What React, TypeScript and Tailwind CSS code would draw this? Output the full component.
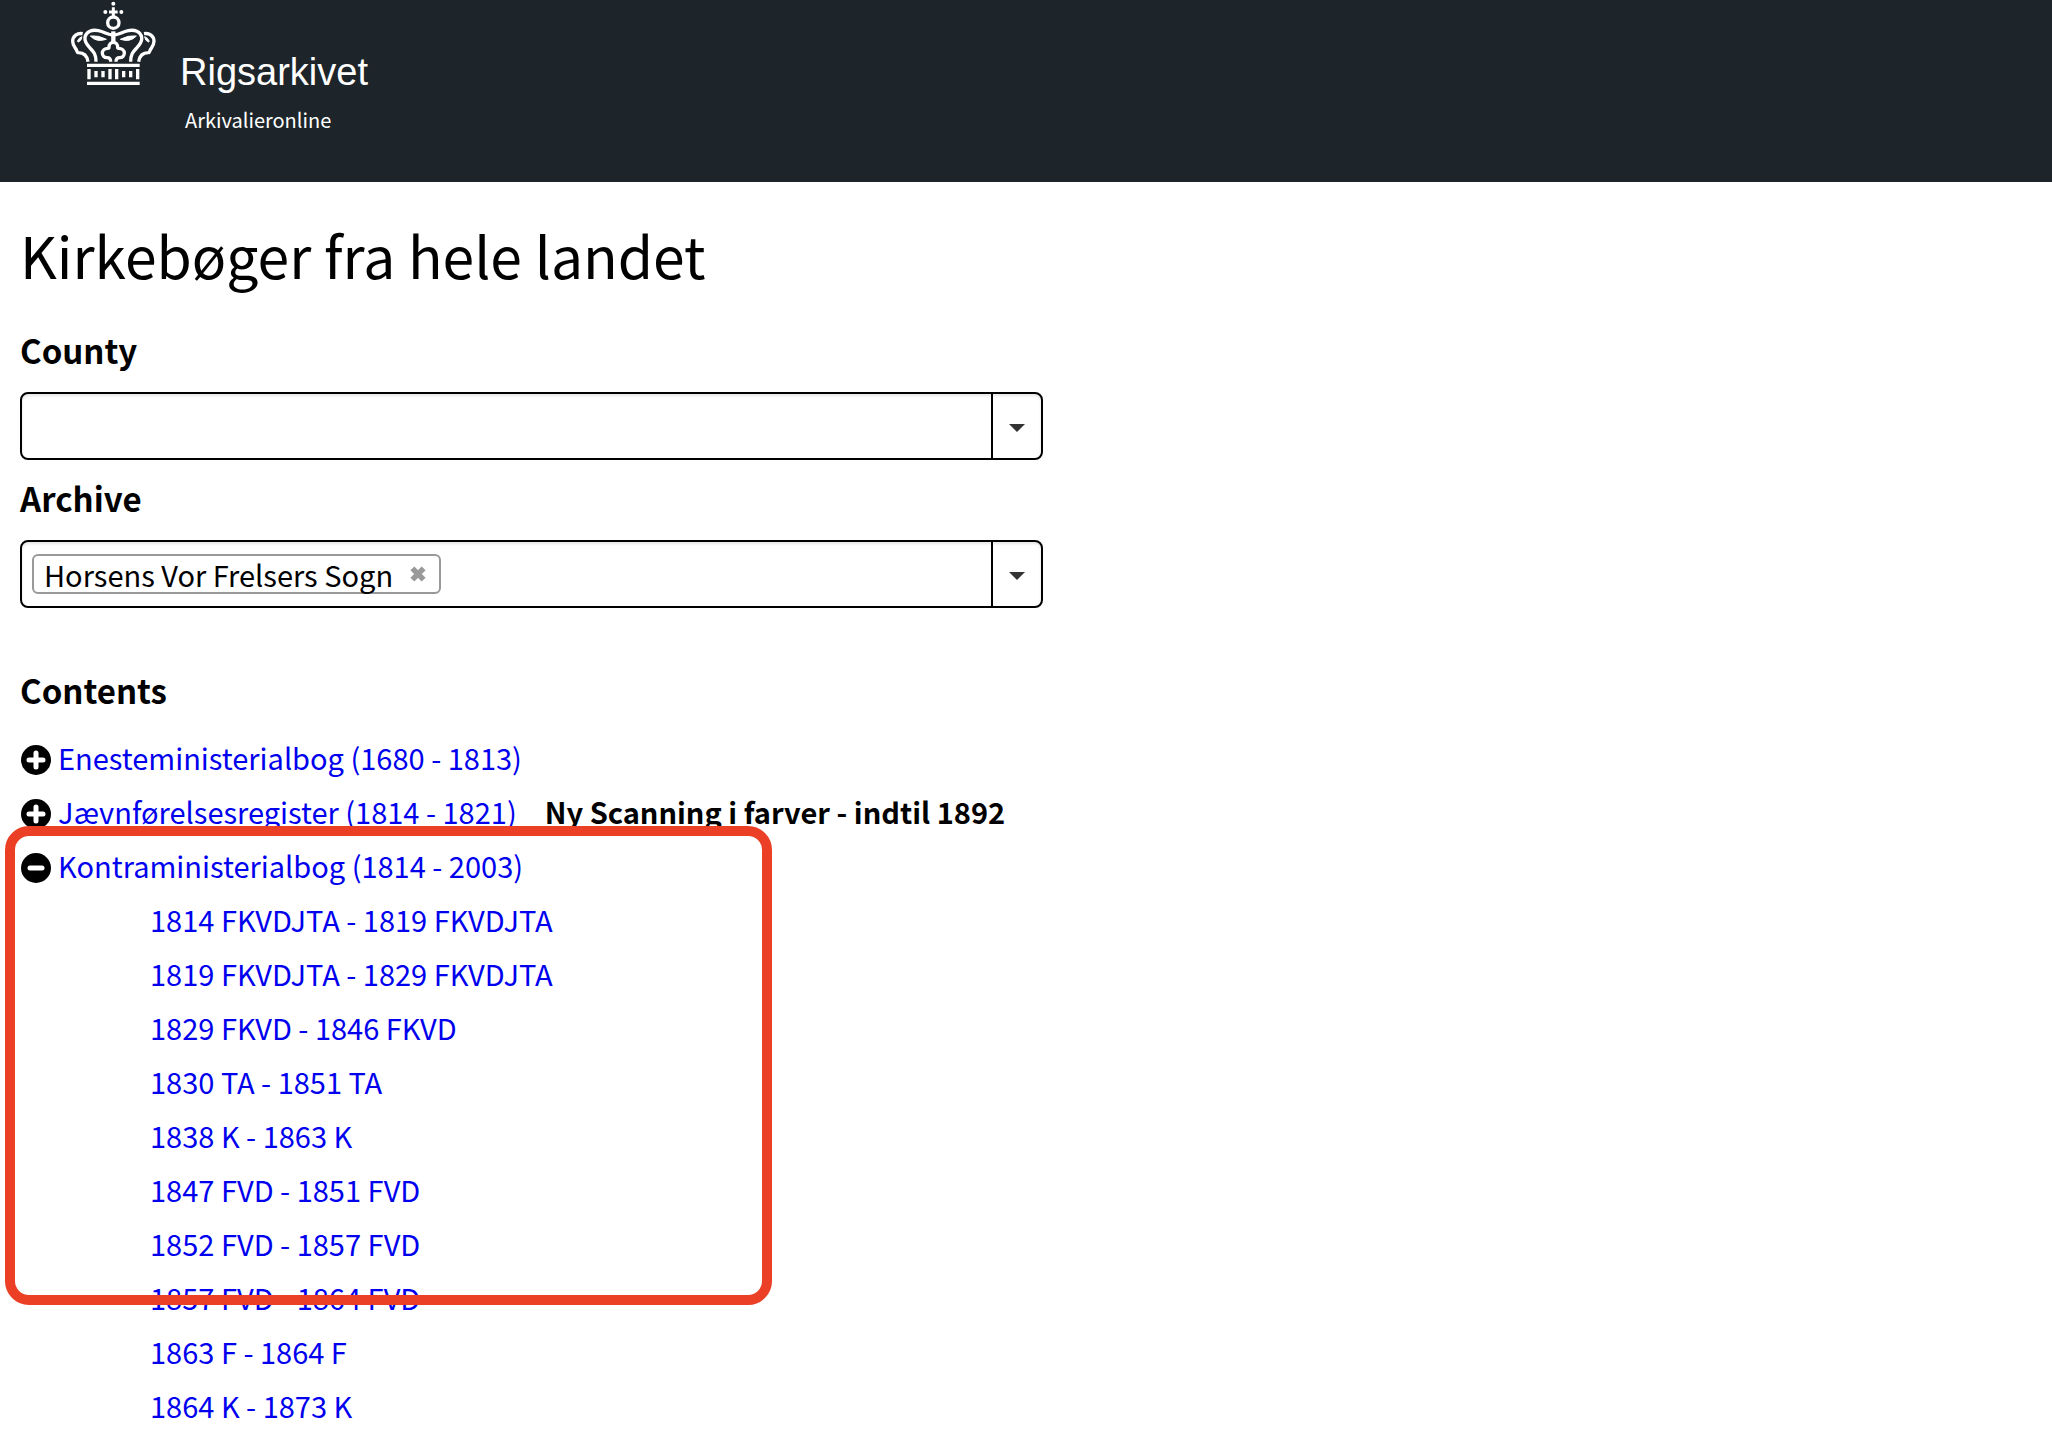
import { useState } from "react";

interface Entry {
  title: string;
  note?: string;
  volumes?: string[];
  highlighted?: boolean;
}

const entries: Entry[] = [
  { title: "Enesteministerialbog (1680 - 1813)" },
  {
    title: "Jævnførelsesregister (1814 - 1821)",
    note: "Ny Scanning i farver - indtil 1892",
  },
  {
    title: "Kontraministerialbog (1814 - 2003)",
    highlighted: true,
    volumes: [
      "1814 FKVDJTA - 1819 FKVDJTA",
      "1819 FKVDJTA - 1829 FKVDJTA",
      "1829 FKVD - 1846 FKVD",
      "1830 TA - 1851 TA",
      "1838 K - 1863 K",
      "1847 FVD - 1851 FVD",
      "1852 FVD - 1857 FVD",
      "1857 FVD - 1864 FVD",
      "1863 F - 1864 F",
      "1864 K - 1873 K",
    ],
  },
];

function Crown() {
  return (
    <svg
      className="w-[130px] h-[100px] shrink-0"
      viewBox="0 0 390 300"
      fill="none"
      stroke="#fff"
      strokeWidth="10"
      aria-hidden="true"
    >
      {/* Orb and cross */}
      <circle cx="190" cy="11" r="6" fill="#fff" stroke="none" />
      <circle cx="166" cy="36" r="6" fill="#fff" stroke="none" />
      <circle cx="214" cy="36" r="6" fill="#fff" stroke="none" />
      <path d="M190 22v26M177 36h26" strokeWidth="9" />
      <circle cx="190" cy="68" r="17" />
      {/* Outer arches */}
      <path d="M98 101C82 98 68 108 68 124c0 12 7 18 11 25 2 4 2 9 6 9 14 0 26 8 29 27" />
      <path d="M282 101c16-3 30 7 30 23 0 12-7 18-11 25-2 4-2 9-6 9-14 0-26 8-29 27" />
      <path d="M82 124q4-11 14-14-1 12-11 16zM298 124q-4-11-14-14 1 12 11 16z" fill="#fff" strokeWidth="3" />
      {/* Front arches */}
      <path d="M138 185c0-24-8-30-19-42-10-11-16-19-14-31 3-18 22-24 40-20 20 4 28 13 45 13s25-9 45-13c18-4 37 2 40 20 2 12-4 20-14 31-11 12-19 18-19 42" />
      <path d="M121 108q25-3 48 10-30 10-48-10zM259 108q-25-3-48 10 30 10 48-10z" fill="#fff" strokeWidth="3" />
      {/* Centre leaf */}
      <path d="M190 94v36" strokeWidth="13" />
      <path d="M182 185c0-10-4-12-11-12-9 0-14-6-14-14s7-14 17-14c2 0 3-1 3-3 0-9 6-15 13-15s13 6 13 15c0 2 1 3 3 3 10 0 17 6 17 14s-5 14-14 14c-7 0-11 2-11 12" />
      {/* Base */}
      <path d="M111 196h158M111 250h158" />
      <path d="M117 207v31M180 207v31M200 207v31M263 207v31" />
      <path d="M138 213v19M159 213v19M221 213v19M242 213v19" />
    </svg>
  );
}

function ToggleIcon({ open }: { open: boolean }) {
  return (
    <svg className="w-8 h-8" viewBox="0 0 32 32" aria-hidden="true">
      <circle cx="16" cy="16" r="15" fill="#000" />
      <path
        d={open ? "M10 16h12" : "M9 16h14M16 9v14"}
        stroke="#fff"
        strokeWidth="5"
        strokeLinecap="round"
      />
    </svg>
  );
}

interface PickerProps {
  id: string;
  label: string;
  initial?: string[];
}

function Picker({ id, label, initial = [] }: PickerProps) {
  const [tags, setTags] = useState(initial);

  return (
    <div className="max-w-[1023px]">
      <label htmlFor={id} className="block text-[33px] leading-[48px] font-bold">
        {label}
      </label>
      <div className="mt-[18px] flex h-[68px] rounded-lg border-2 border-black bg-white shadow-[inset_0_2px_3px_rgba(0,0,0,0.1)]">
        <div className="flex flex-1 min-w-0 items-center gap-2 px-[10px]">
          {tags.map((tag) => (
            <span
              key={tag}
              className="flex h-10 shrink-0 items-center gap-4 rounded-md border-2 border-[#999] pl-[10px] pr-3 text-[29px] leading-9"
            >
              {tag}
              <button
                type="button"
                aria-label={`Remove ${tag}`}
                onClick={() => setTags(tags.filter((t) => t !== tag))}
              >
                <svg className="w-[18px] h-[18px]" viewBox="0 0 16 16" aria-hidden="true">
                  <path d="M3 3l10 10M13 3L3 13" stroke="#999" strokeWidth="5" />
                </svg>
              </button>
            </span>
          ))}
          <input
            id={id}
            type="text"
            autoComplete="off"
            className="h-full min-w-0 flex-1 bg-transparent text-[29px] outline-none"
          />
        </div>
        <button
          type="button"
          aria-label={`Show ${label}`}
          className="flex w-[50px] items-center justify-center border-l-2 border-black pt-1"
        >
          <svg className="w-4 h-2" viewBox="0 0 16 8" aria-hidden="true">
            <path d="M0 0h16L8 8z" fill="#333" />
          </svg>
        </button>
      </div>
    </div>
  );
}

function EntryRow({ entry }: { entry: Entry }) {
  const [open, setOpen] = useState(Boolean(entry.volumes));

  return (
    <li className="relative">
      <div className="flex h-[54px] items-center">
        <button
          type="button"
          aria-expanded={open}
          aria-label={entry.title}
          className="mr-[6px] pt-[6px]"
          onClick={() => setOpen(!open)}
        >
          <ToggleIcon open={open} />
        </button>
        <a href="#" className="text-[#0000ee]">
          {entry.title}
        </a>
        {entry.note && <strong className="ml-7 font-bold">{entry.note}</strong>}
      </div>
      {open && entry.volumes && (
        <ul className="pl-[130px]">
          {entry.volumes.map((volume) => (
            <li key={volume}>
              <a href="#" className="text-[#0000ee]">
                {volume}
              </a>
            </li>
          ))}
        </ul>
      )}
      {entry.highlighted && (
        <div className="pointer-events-none absolute -top-3 -left-[15px] h-[479px] w-[767px] rounded-3xl border-[10px] border-[#eb4026]" />
      )}
    </li>
  );
}

export default function App() {
  return (
    <div className="h-screen overflow-hidden bg-white text-black font-['Noto_Sans_CJK_JP','Noto_Sans',sans-serif]">
      <header className="flex h-[182px] bg-[#1d252a] pl-[50px] text-white">
        <Crown />
        <div className="pt-12">
          <div className="font-['Liberation_Sans',sans-serif] text-[38px] leading-[48px]">
            Rigsarkivet
          </div>
          <div className="mt-[10px] pl-[5px] text-[20px] leading-7">
            Arkivalieronline
          </div>
        </div>
      </header>

      <main className="px-5 pt-8">
        <h1 className="text-[57px] leading-[80px]">Kirkebøger fra hele landet</h1>

        <form className="mt-8 flex flex-col gap-[14px]">
          <Picker id="county" label="County" />
          <Picker
            id="archive"
            label="Archive"
            initial={["Horsens Vor Frelsers Sogn"]}
          />
        </form>

        <h2 className="mt-[58px] text-[33px] leading-[48px] font-bold">Contents</h2>
        <ul className="mt-4 text-[29px] leading-[54px]">
          {entries.map((entry) => (
            <EntryRow key={entry.title} entry={entry} />
          ))}
        </ul>
      </main>
    </div>
  );
}
